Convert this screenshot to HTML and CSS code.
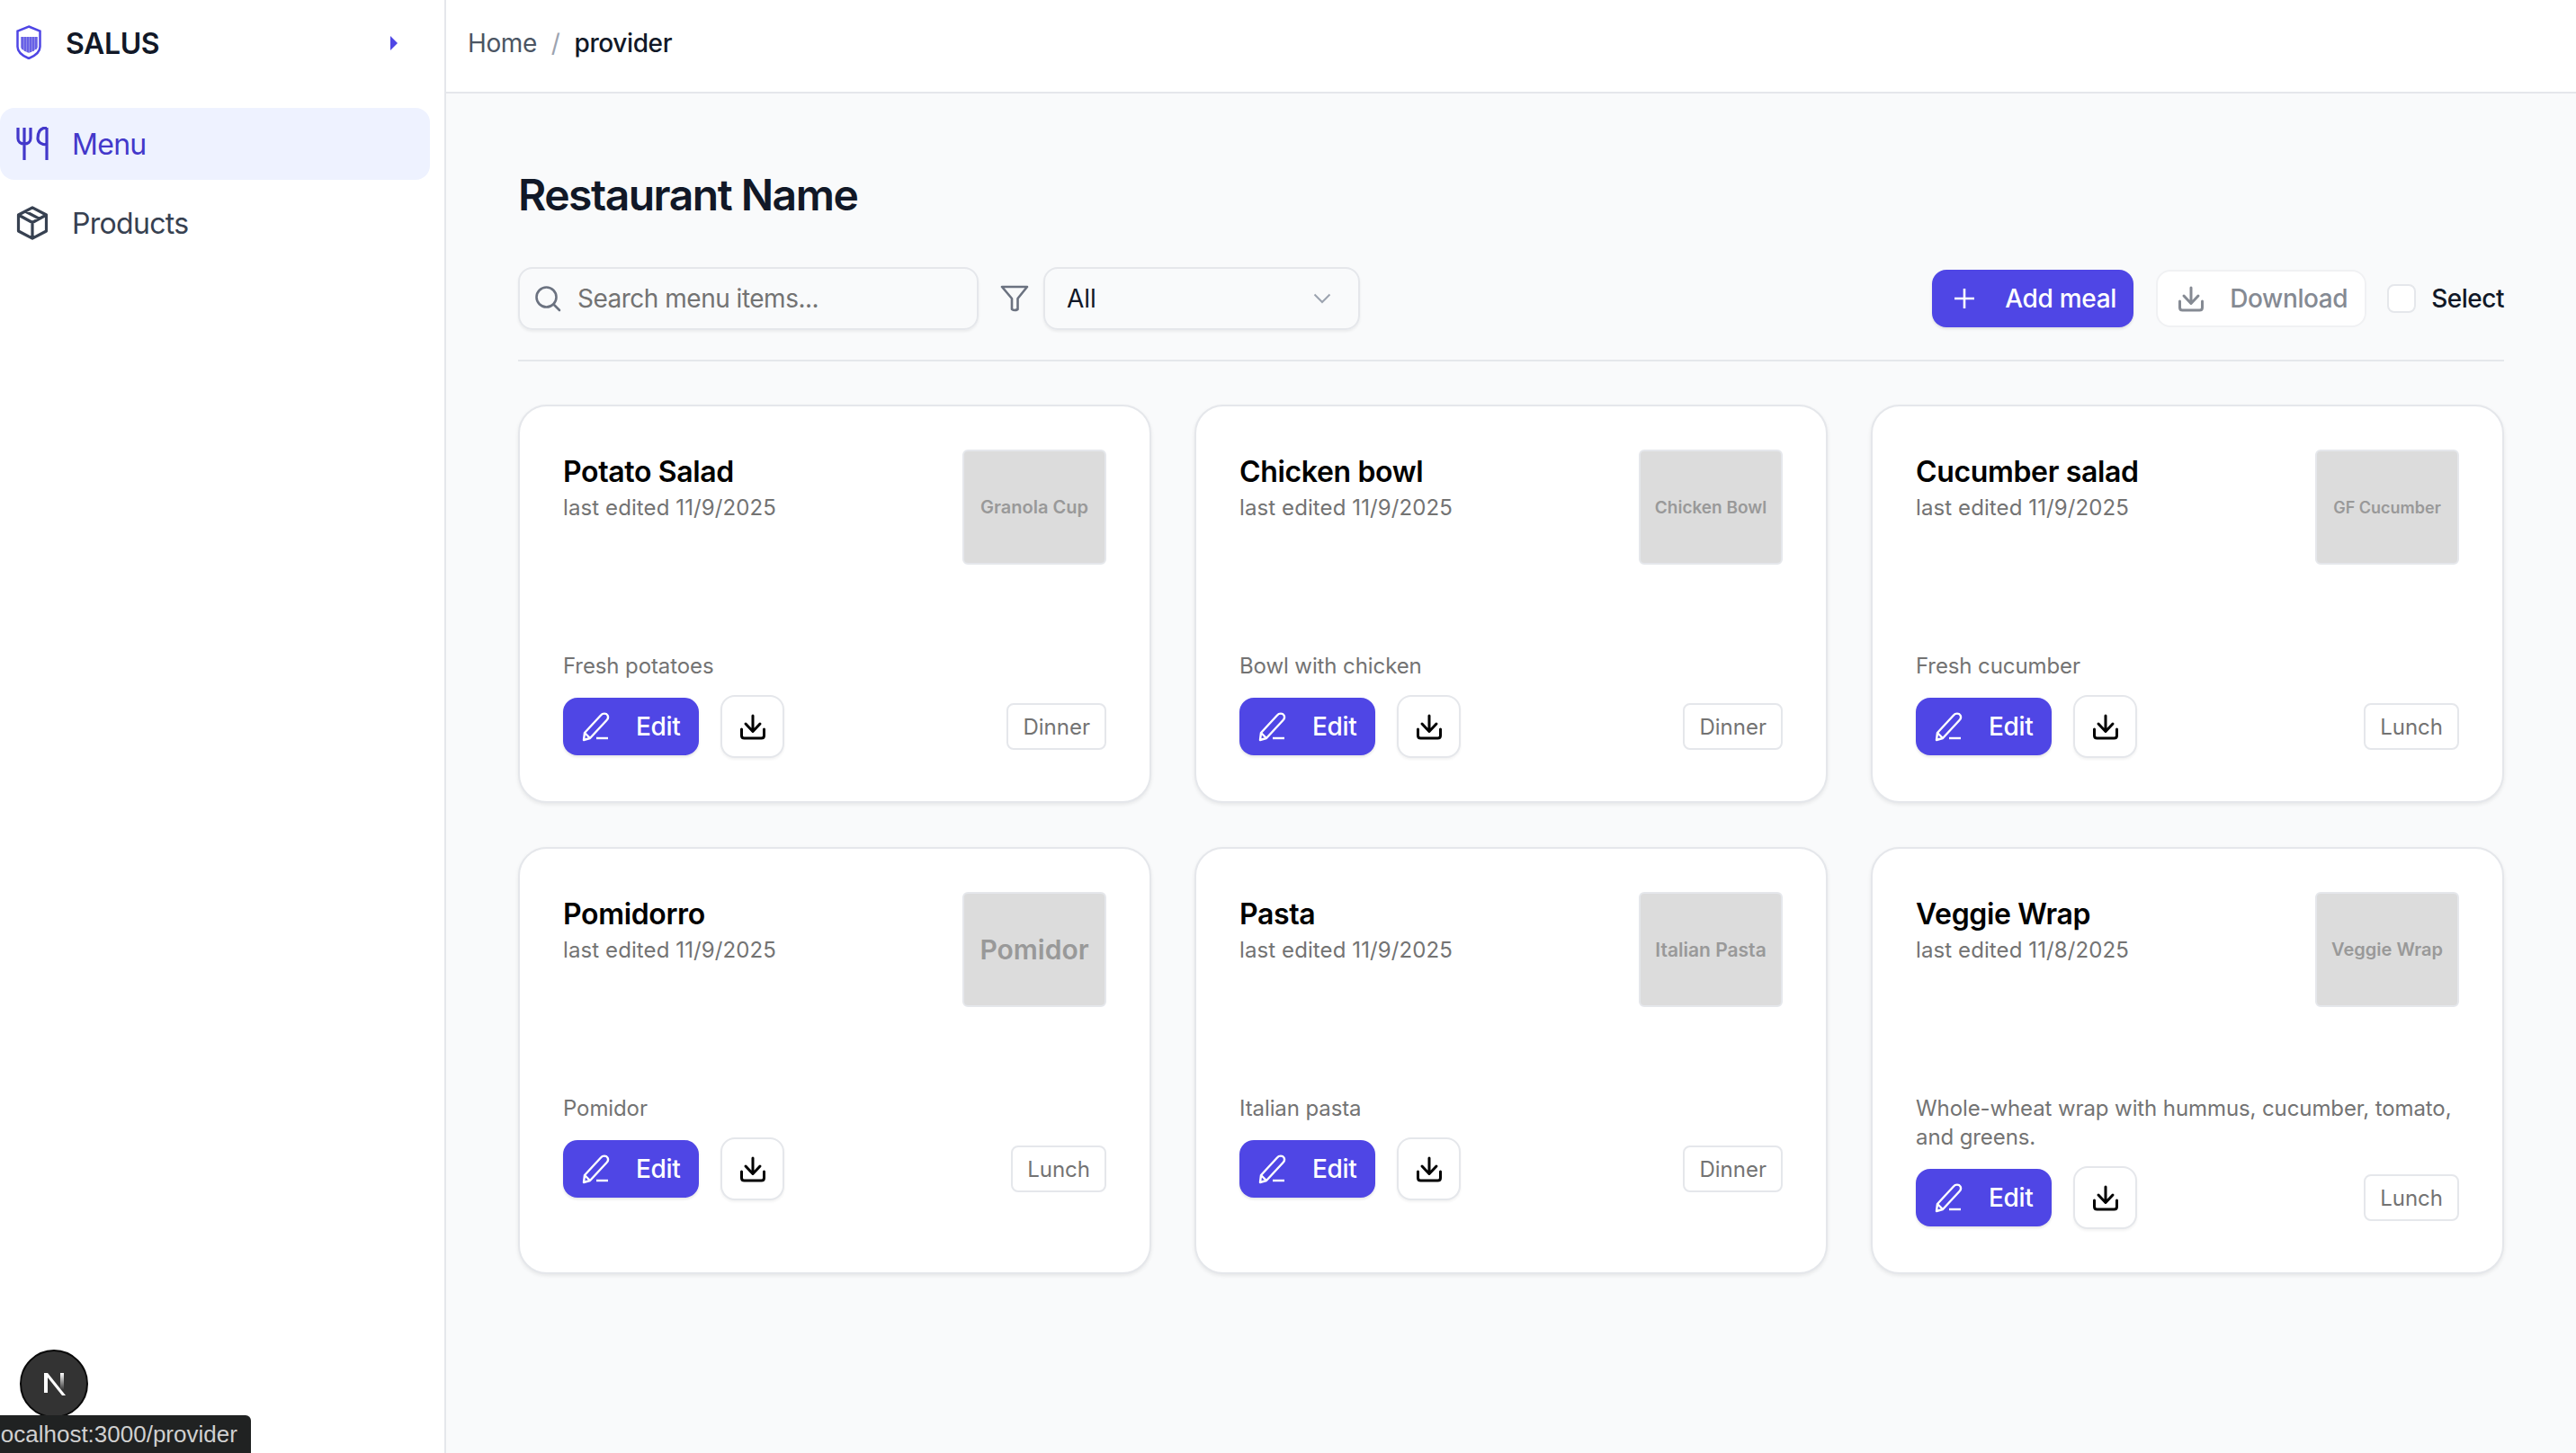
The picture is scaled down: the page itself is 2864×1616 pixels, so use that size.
FILE: index.html
```html
<!DOCTYPE html>
<html lang="en">
<head>
<meta charset="utf-8">
<title>Restaurant Name</title>
<link rel="stylesheet" href="styles.css">
</head>
<body>
<svg class="defs" aria-hidden="true">
  <symbol id="i-pen" viewBox="0 0 32 40"><path d="M3 35 L4 27 L22 7.500 C24 5 28 5 29.500 7.500 C30.500 9.500 30 11.500 28.500 13 L10 33 Z M4 27 L10 33" fill="none" stroke="currentColor" stroke-width="2.400" stroke-linejoin="round"/><path d="M17 33 H30" fill="none" stroke="currentColor" stroke-width="2.400"/></symbol>
  <symbol id="i-down" viewBox="0 0 30 40"><path d="M15 8 V25 M7 17 L15 25.500 L23 17" fill="none" stroke="currentColor" stroke-width="3" stroke-linecap="round" stroke-linejoin="round"/><path d="M2.500 23 V30 Q2.500 33 5.500 33 H24.500 Q27.500 33 27.500 30 V23" fill="none" stroke="currentColor" stroke-width="3" stroke-linecap="round"/></symbol>
</svg>
<div class="app">
  <aside class="sidebar">
    <div class="brand">
      <svg class="brand-logo" viewBox="0 0 28 38"><path d="M14 1.500 L26.500 6.500 V24 C26.500 30 20 34.500 14 37 C8 34.500 1.500 30 1.500 24 V6.500 Z" fill="#fff" stroke="#4f46e5" stroke-width="2.500"/><path d="M5 13 H24 V25 C21 28 17 30 14 31 C11 30 7 28 5 25 Z" fill="#8f8ae8"/><path d="M7 13 V27 M10 13 V29 M13 13 V30 M16 13 V30 M19 13 V29 M22 13 V27" stroke="#4f46e5" stroke-width="1.200"/></svg>
      <span class="brand-name">SALUS</span>
      <svg class="brand-caret" viewBox="0 0 8 16"><path d="M0 0 L8 8 L0 16 Z" fill="#4f46e5"/></svg>
    </div>
    <nav class="nav">
      <a class="nav-item nav-item-active">
        <svg class="nav-icon" viewBox="0 0 36 38"><path d="M2 1 V13 C2 17 5 19 9 19 C13 19 16 17 16 13 V1 M9 1 V37 M34 1 V37 M34 1 C27 1 24 6 24 13 C24 17 28 20 34 20" fill="none" stroke="currentColor" stroke-width="3.200"/></svg>
        <span>Menu</span>
      </a>
      <a class="nav-item">
        <svg class="nav-icon" viewBox="0 0 36 38"><path d="M18 1.800 L33.500 10 V28 L18 36.200 L2.500 28 V10 Z M2.500 10 L18 18.500 L33.500 10 M18 18.500 V36.200 M10 6 L25.500 14.200" fill="none" stroke="currentColor" stroke-width="3.200" stroke-linejoin="round"/></svg>
        <span>Products</span>
      </a>
    </nav>
  </aside>
  <div class="main">
    <header class="topbar">
      <span class="crumb">Home</span>
      <span class="crumb-sep">/</span>
      <span class="crumb-current">provider</span>
    </header>
    <main class="content">
      <h1 class="title">Restaurant Name</h1>
      <div class="toolbar">
        <div class="search">
          <svg class="search-icon" viewBox="0 0 30 30"><circle cx="13.500" cy="13.500" r="11" fill="none" stroke="currentColor" stroke-width="2.600"/><path d="M21.500 21.500 L28 28" stroke="currentColor" stroke-width="2.600" stroke-linecap="round"/></svg>
          <span>Search menu items...</span>
        </div>
        <svg class="filter-icon" viewBox="0 0 32 30"><path d="M2 2 H30 L19.500 15 V27 Q16 29 13 27 V15 Z" fill="none" stroke="currentColor" stroke-width="2.600" stroke-linejoin="round"/></svg>
        <div class="select">
          <span>All</span>
          <svg class="select-caret" viewBox="0 0 20 12"><path d="M1.500 1.500 L10 10 L18.500 1.500" fill="none" stroke="currentColor" stroke-width="2"/></svg>
        </div>
        <div class="toolbar-right">
          <button class="btn btn-primary btn-add">
            <svg class="plus-icon" viewBox="0 0 24 24"><path d="M12 1 V23 M1 12 H23" stroke="currentColor" stroke-width="2.600"/></svg>
            <span>Add meal</span>
          </button>
          <button class="btn btn-download">
            <svg class="down-icon"><use href="#i-down"/></svg>
            <span>Download</span>
          </button>
          <label class="check"><span class="check-box"></span><span>Select</span></label>
        </div>
      </div>
      <section class="grid">
        <article class="card">
          <div class="card-head">
            <div class="card-heading"><h2 class="card-title">Potato Salad</h2><p class="card-date">last edited 11/9/2025</p></div>
            <div class="thumb">Granola Cup</div>
          </div>
          <p class="card-desc">Fresh potatoes</p>
          <div class="card-actions">
            <button class="btn btn-primary btn-edit"><svg class="pen-icon"><use href="#i-pen"/></svg><span>Edit</span></button>
            <button class="btn-icon"><svg class="down-icon"><use href="#i-down"/></svg></button>
            <span class="tag">Dinner</span>
          </div>
        </article>
        <article class="card">
          <div class="card-head">
            <div class="card-heading"><h2 class="card-title">Chicken bowl</h2><p class="card-date">last edited 11/9/2025</p></div>
            <div class="thumb thumb-19">Chicken Bowl</div>
          </div>
          <p class="card-desc">Bowl with chicken</p>
          <div class="card-actions">
            <button class="btn btn-primary btn-edit"><svg class="pen-icon"><use href="#i-pen"/></svg><span>Edit</span></button>
            <button class="btn-icon"><svg class="down-icon"><use href="#i-down"/></svg></button>
            <span class="tag">Dinner</span>
          </div>
        </article>
        <article class="card">
          <div class="card-head">
            <div class="card-heading"><h2 class="card-title">Cucumber salad</h2><p class="card-date">last edited 11/9/2025</p></div>
            <div class="thumb thumb-18">GF Cucumber</div>
          </div>
          <p class="card-desc">Fresh cucumber</p>
          <div class="card-actions">
            <button class="btn btn-primary btn-edit"><svg class="pen-icon"><use href="#i-pen"/></svg><span>Edit</span></button>
            <button class="btn-icon"><svg class="down-icon"><use href="#i-down"/></svg></button>
            <span class="tag">Lunch</span>
          </div>
        </article>
        <article class="card">
          <div class="card-head">
            <div class="card-heading"><h2 class="card-title">Pomidorro</h2><p class="card-date">last edited 11/9/2025</p></div>
            <div class="thumb thumb-30">Pomidor</div>
          </div>
          <p class="card-desc">Pomidor</p>
          <div class="card-actions">
            <button class="btn btn-primary btn-edit"><svg class="pen-icon"><use href="#i-pen"/></svg><span>Edit</span></button>
            <button class="btn-icon"><svg class="down-icon"><use href="#i-down"/></svg></button>
            <span class="tag">Lunch</span>
          </div>
        </article>
        <article class="card">
          <div class="card-head">
            <div class="card-heading"><h2 class="card-title">Pasta</h2><p class="card-date">last edited 11/9/2025</p></div>
            <div class="thumb thumb-21">Italian Pasta</div>
          </div>
          <p class="card-desc">Italian pasta</p>
          <div class="card-actions">
            <button class="btn btn-primary btn-edit"><svg class="pen-icon"><use href="#i-pen"/></svg><span>Edit</span></button>
            <button class="btn-icon"><svg class="down-icon"><use href="#i-down"/></svg></button>
            <span class="tag">Dinner</span>
          </div>
        </article>
        <article class="card">
          <div class="card-head">
            <div class="card-heading"><h2 class="card-title">Veggie Wrap</h2><p class="card-date">last edited 11/8/2025</p></div>
            <div class="thumb">Veggie Wrap</div>
          </div>
          <p class="card-desc">Whole-wheat wrap with hummus, cucumber, tomato, and greens.</p>
          <div class="card-actions">
            <button class="btn btn-primary btn-edit"><svg class="pen-icon"><use href="#i-pen"/></svg><span>Edit</span></button>
            <button class="btn-icon"><svg class="down-icon"><use href="#i-down"/></svg></button>
            <span class="tag">Lunch</span>
          </div>
        </article>
      </section>
    </main>
  </div>
</div>
<div class="dev-badge">
  <svg class="dev-n" viewBox="0 0 30 30"><defs><linearGradient id="n-fade" x1="0" y1="0" x2="0" y2="1"><stop offset="0" stop-color="#fff"/><stop offset="1" stop-color="#fff" stop-opacity="0"/></linearGradient></defs><path d="M4 3 H8 V25 H4 Z" fill="#fff"/><path d="M4 3 H8 L28 28 H24 Z" fill="#fff"/><path d="M22 3 H26 V22 H22 Z" fill="url(#n-fade)"/></svg>
</div>
<div class="status-tip">localhost:3000/provider</div>
</body>
</html>
```
FILE: styles.css
```css
* { box-sizing: border-box; }
html, body { margin: 0; height: 100%; }
body {
  font-family: Inter, "Liberation Sans", sans-serif;
  color: #111827;
  background: #f9fafb;
  overflow: hidden;
}
.defs { position: absolute; width: 0; height: 0; }
.app { display: flex; height: 1616px; }

.sidebar {
  width: 496px;
  flex: none;
  background: #fff;
  border-right: 2px solid #e5e7eb;
  padding-right: 16px;
}
.brand {
  display: flex;
  align-items: center;
  height: 96px;
  padding: 0 36px 0 18px;
}
.brand-logo { width: 28px; height: 38px; flex: none; margin-top: -2px; }
.brand-name { margin-left: 27px; font-size: 32px; font-weight: 600; letter-spacing: -.4px; flex: 1; }
.brand-caret { width: 8px; height: 16px; flex: none; }
.nav { display: flex; flex-direction: column; gap: 8px; margin-top: 24px; }
.nav-item {
  display: flex;
  align-items: center;
  gap: 26px;
  height: 80px;
  padding-left: 18px;
  border-radius: 16px;
  font-size: 32px;
  letter-spacing: -.7px;
  color: #374151;
}
.nav-item-active { background: #eef2ff; color: #4338ca; }
.nav-icon { width: 36px; height: 38px; flex: none; }

.main { flex: 1; min-width: 0; display: flex; flex-direction: column; }
.topbar {
  display: flex;
  align-items: center;
  gap: 16px;
  height: 104px;
  padding: 0 24px 7px;
  background: #fff;
  border-bottom: 2px solid #e5e7eb;
  font-size: 28px;
  letter-spacing: -.4px;
}
.crumb { color: #4b5563; }
.crumb-sep { color: #9ca3af; }
.crumb-current { color: #111827; font-weight: 500; }

.content { padding: 81px 80px 0; }
.title { margin: 0 0 48px; font-size: 48px; line-height: 64px; font-weight: 600; letter-spacing: -1.5px; }

.toolbar {
  display: flex;
  align-items: flex-start;
  height: 105px;
  border-bottom: 2px solid #e5e7eb;
  margin-bottom: 48px;
}
.search, .select {
  display: flex;
  align-items: center;
  height: 70px;
  border: 2px solid #e5e7eb;
  border-radius: 16px;
  box-shadow: 0 2px 3px rgba(0, 0, 0, .06);
  font-size: 28px;
}
.search {
  width: 512px;
  gap: 18px;
  padding-left: 16px;
  letter-spacing: -.5px;
  color: #737373;
}
.search-icon { width: 30px; height: 30px; flex: none; color: #6b7280; }
.filter-icon { width: 32px; height: 30px; margin: 20px 16px 0 24px; flex: none; color: #6b7280; }
.select {
  width: 352px;
  justify-content: space-between;
  padding: 0 30px 0 24px;
  color: #111827;
}
.select-caret { width: 20px; height: 12px; color: #9ca3af; }
.toolbar-right { margin-left: auto; height: 70px; display: flex; align-items: center; }

.btn {
  display: flex;
  align-items: center;
  border-radius: 16px;
  font-family: inherit;
  font-size: 28px;
  font-weight: 500;
  cursor: pointer;
}
.btn-primary {
  height: 64px;
  border: 0;
  background: #4f46e5;
  color: #fff;
  box-shadow: 0 2px 3px rgba(0, 0, 0, .1);
}
.btn-add { width: 224px; padding-left: 24px; gap: 33px; letter-spacing: -.3px; }
.plus-icon { width: 24px; height: 24px; flex: none; }
.btn-download {
  width: 234px;
  height: 64px;
  margin-left: 25px;
  padding-left: 22px;
  gap: 28px;
  background: #fff;
  border: 2px solid #f0f1f3;
  letter-spacing: -.4px;
  color: #858a93;
}
.down-icon { width: 30px; height: 40px; flex: none; }
.btn-download .down-icon { color: #858a93; }
.check { display: flex; align-items: center; margin-left: 23px; gap: 17px; font-size: 28px; font-weight: 500; letter-spacing: -.5px; }
.check-box {
  width: 32px;
  height: 32px;
  border: 2px solid #e5e7eb;
  border-radius: 8px;
  background: #fff;
}

.grid {
  display: grid;
  grid-template-columns: repeat(3, 1fr);
  gap: 49px 48px;
}
.card {
  padding: 48px;
  background: #fff;
  border: 2px solid #e5e7eb;
  border-radius: 32px;
  box-shadow: 0 2px 4px rgba(0, 0, 0, .08);
}
.card-head { display: flex; justify-content: space-between; margin-bottom: 97px; }
.card-title { margin: 3px 0 0; font-size: 32px; line-height: 44px; font-weight: 600; letter-spacing: -.35px; color: #000; }
.card-date { margin: 0; font-size: 24px; line-height: 36px; letter-spacing: .1px; color: #737373; }
.thumb {
  width: 160px;
  height: 128px;
  flex: none;
  display: flex;
  align-items: center;
  justify-content: center;
  background: #dcdcdc;
  border: 2px solid #e5e7eb;
  border-radius: 6px;
  color: #999;
  font-size: 20px;
  font-weight: 600;
  white-space: nowrap;
}
.thumb-18 { font-size: 18px; }
.thumb-19 { font-size: 19px; }
.thumb-21 { font-size: 21px; }
.thumb-30 { font-size: 30px; }
.card-desc { margin: 0 0 16px; font-size: 24px; line-height: 32px; letter-spacing: -.1px; color: #737373; }
.card-actions { display: flex; align-items: center; height: 70px; }
.btn-edit { width: 151px; padding-left: 20px; gap: 29px; letter-spacing: -.3px; }
.pen-icon { width: 32px; height: 40px; flex: none; }
.btn-icon {
  width: 71px;
  height: 70px;
  margin-left: 24px;
  display: flex;
  align-items: center;
  justify-content: center;
  padding: 0;
  background: #fff;
  border: 2px solid #e5e7eb;
  border-radius: 16px;
  box-shadow: 0 2px 3px rgba(0, 0, 0, .05);
  color: #000;
  cursor: pointer;
}
.tag {
  margin-left: auto;
  height: 52px;
  display: flex;
  align-items: center;
  padding: 0 16px;
  border: 2px solid #e5e7eb;
  border-radius: 8px;
  font-size: 24px;
  color: #737373;
}

.dev-badge {
  position: absolute;
  left: 22px;
  top: 1501px;
  width: 76px;
  height: 76px;
  display: flex;
  align-items: center;
  justify-content: center;
  background: #333;
  border: 2px solid #0a0a0a;
  border-radius: 50%;
}
.dev-n { width: 30px; height: 30px; }
.status-tip {
  position: absolute;
  left: -20px;
  top: 1574px;
  height: 42px;
  padding: 0 15px;
  display: flex;
  align-items: center;
  background: #202222;
  border-radius: 0 6px 0 0;
  font-family: "Liberation Sans", sans-serif;
  font-size: 26px;
  color: #d0d0d0;
}
```
